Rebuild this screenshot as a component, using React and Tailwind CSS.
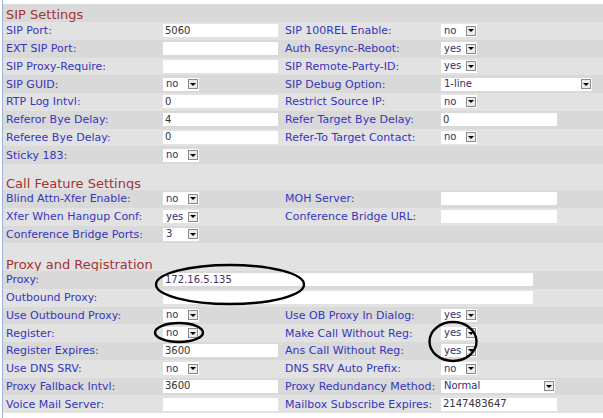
import React from "react";

const D = "bg-[#d9d9d9]";
const L = "bg-[#e2e2e2]";

function Sel({ value, w = "w-[36px]" }) {
  return (
    <div className={`flex items-center h-[13px] bg-white text-[10px] ${w}`}>
      <span className="pl-[3px] flex-1 leading-none text-[#30306a]">{value}</span>
      <span className="mr-[1px] w-[10px] h-[10px] border border-[#8a8a8a] bg-[#ececec] flex items-center justify-center">
        <span className="w-0 h-0 border-l-[3px] border-r-[3px] border-t-[3px] border-l-transparent border-r-transparent border-t-black" />
      </span>
    </div>
  );
}

function Inp({ value, w = "w-[115px]" }) {
  return (
    <div className={`h-[13px] bg-white ${w} pl-[2px] flex items-center leading-none text-[10px] text-[#333]`}>
      {value}
    </div>
  );
}

function Row({ bg, l1, v1, l2, v2 }) {
  return (
    <div className={`grid grid-cols-[160px_122px_156px_1fr] h-[17.75px] items-center ${bg}`}>
      <div className="pl-[3px] whitespace-nowrap leading-none">{l1}</div>
      <div>{v1}</div>
      <div className="whitespace-nowrap leading-none">{l2}</div>
      <div>{v2}</div>
    </div>
  );
}

function WideRow({ bg, l1, v1 }) {
  return (
    <div className={`grid grid-cols-[160px_1fr] h-[17.75px] items-center ${bg}`}>
      <div className="pl-[3px] whitespace-nowrap leading-none">{l1}</div>
      <div>{v1}</div>
    </div>
  );
}

export default function App() {
  return (
    <div
      className="relative w-[603px] h-[418px] bg-white flex text-[11px] text-[#3535bd] overflow-hidden"
      style={{ fontFamily: '"DejaVu Sans", Verdana, sans-serif' }}
    >
      <div className="w-[2px] bg-white" />
      <div className="w-[1px] bg-[#9fb4dc]" />
      <div className="flex-1 flex flex-col pt-[4px]">
        <div className={`h-[18px] flex items-center pt-[2px] pl-[3px] text-[13px] leading-none text-[#a03434] ${D}`}>SIP Settings</div>
        <Row bg={L} l1="SIP Port:" v1={<Inp value="5060" />} l2="SIP 100REL Enable:" v2={<Sel value="no" />} />
        <Row bg={D} l1="EXT SIP Port:" v1={<Inp value="" />} l2="Auth Resync-Reboot:" v2={<Sel value="yes" />} />
        <Row bg={L} l1="SIP Proxy-Require:" v1={<Inp value="" />} l2="SIP Remote-Party-ID:" v2={<Sel value="yes" />} />
        <Row bg={D} l1="SIP GUID:" v1={<Sel value="no" />} l2="SIP Debug Option:" v2={<Sel value="1-line" w="w-[151px]" />} />
        <Row bg={L} l1="RTP Log Intvl:" v1={<Inp value="0" />} l2="Restrict Source IP:" v2={<Sel value="no" />} />
        <Row bg={D} l1="Referor Bye Delay:" v1={<Inp value="4" />} l2="Refer Target Bye Delay:" v2={<Inp value="0" w="w-[116px]" />} />
        <Row bg={L} l1="Referee Bye Delay:" v1={<Inp value="0" />} l2="Refer-To Target Contact:" v2={<Sel value="no" />} />
        <Row bg={D} l1="Sticky 183:" v1={<Sel value="no" />} l2="" v2={null} />

        <div className={`h-[26px] flex items-end pl-[3px] text-[13px] leading-[12px] text-[#a03434] ${L}`}>Call Feature Settings</div>
        <Row bg={D} l1="Blind Attn-Xfer Enable:" v1={<Sel value="no" />} l2="MOH Server:" v2={<Inp value="" w="w-[116px]" />} />
        <Row bg={L} l1="Xfer When Hangup Conf:" v1={<Sel value="yes" />} l2="Conference Bridge URL:" v2={<Inp value="" w="w-[116px]" />} />
        <Row bg={D} l1="Conference Bridge Ports:" v1={<Sel value="3" />} l2="" v2={null} />

        <div className={`h-[27.75px] flex items-end pl-[3px] text-[13px] leading-[12px] text-[#a03434] ${L}`}>Proxy and Registration</div>
        <WideRow bg={D} l1="Proxy:" v1={<div className="h-[13px] w-[370px] bg-white pl-[2px] flex items-center leading-none text-[10px] text-[#3a3468]">172.16.5.135</div>} />
        <WideRow bg={L} l1="Outbound Proxy:" v1={<div className="h-[13px] w-[370px] bg-white" />} />
        <Row bg={D} l1="Use Outbound Proxy:" v1={<Sel value="no" />} l2="Use OB Proxy In Dialog:" v2={<Sel value="yes" />} />
        <Row bg={L} l1="Register:" v1={<Sel value="no" />} l2="Make Call Without Reg:" v2={<Sel value="yes" />} />
        <Row bg={D} l1="Register Expires:" v1={<Inp value="3600" />} l2="Ans Call Without Reg:" v2={<Sel value="yes" />} />
        <Row bg={L} l1="Use DNS SRV:" v1={<Sel value="no" />} l2="DNS SRV Auto Prefix:" v2={<Sel value="no" />} />
        <Row bg={D} l1="Proxy Fallback Intvl:" v1={<Inp value="3600" />} l2="Proxy Redundancy Method:" v2={<Sel value="Normal" w="w-[114px]" />} />
        <Row bg={L} l1="Voice Mail Server:" v1={<Inp value="" />} l2="Mailbox Subscribe Expires:" v2={<Inp value="2147483647" w="w-[116px]" />} />
      </div>

      <svg className="absolute inset-0 pointer-events-none" width="603" height="418" viewBox="0 0 603 418">
        <ellipse cx="230" cy="284.5" rx="74" ry="19.5" fill="none" stroke="black" strokeWidth="2.4" />
        <ellipse cx="179" cy="332.5" rx="24" ry="9.5" fill="none" stroke="black" strokeWidth="2.4" />
        <ellipse cx="453" cy="341.5" rx="23.5" ry="19.5" fill="none" stroke="black" strokeWidth="2.4" />
      </svg>
    </div>
  );
}
